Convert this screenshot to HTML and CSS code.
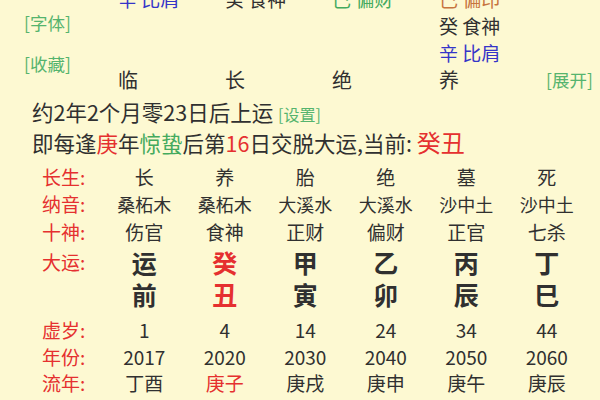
FILE: index.html
```html
<!DOCTYPE html>
<html lang="zh">
<head>
<meta charset="utf-8">
<link rel="stylesheet" href="styles.css">
</head>
<body>
<div class="page">
  <div class="pillars">
    <div class="side">
      <span class="link">[字体]</span>
      <span class="link">[收藏]</span>
    </div>
    <div class="cell blue">辛 比肩</div>
    <div class="cell">癸 食神</div>
    <div class="cell green">己 偏财</div>
    <div class="cell brown">己 偏印</div>
    <div class="end"></div>
    <div class="cell c5">癸 食神</div>
    <div class="cell c5 blue">辛 比肩</div>
    <div class="cell c2 big">临</div>
    <div class="cell big">长</div>
    <div class="cell big">绝</div>
    <div class="cell big">养</div>
    <div class="end"><span class="link">[展开]</span></div>
  </div>

  <div class="info">
    <p>约2年2个月零23日后上运 <span class="link small">[设置]</span></p>
    <p>即每逢<span class="red">庚</span>年<span class="green">惊蛰</span>后第<span class="red">16</span>日交脱大运,当前: <span class="red cur">癸丑</span></p>
  </div>

  <div class="table">
    <div class="row r1"><span class="lab">长生:</span><span>长</span><span>养</span><span>胎</span><span>绝</span><span>墓</span><span>死</span></div>
    <div class="row r1 na"><span class="lab">纳音:</span><span>桑柘木</span><span>桑柘木</span><span>大溪水</span><span>大溪水</span><span>沙中土</span><span>沙中土</span></div>
    <div class="row r1"><span class="lab">十神:</span><span>伤官</span><span>食神</span><span>正财</span><span>偏财</span><span>正官</span><span>七杀</span></div>
    <div class="row yun"><span class="lab">大运:</span><span>运</span><span class="red">癸</span><span>甲</span><span>乙</span><span>丙</span><span>丁</span></div>
    <div class="row yun"><span class="lab"></span><span>前</span><span class="red">丑</span><span>寅</span><span>卯</span><span>辰</span><span>巳</span></div>
    <div class="row r2 first"><span class="lab">虚岁:</span><span>1</span><span>4</span><span>14</span><span>24</span><span>34</span><span>44</span></div>
    <div class="row r2"><span class="lab">年份:</span><span>2017</span><span>2020</span><span>2030</span><span>2040</span><span>2050</span><span>2060</span></div>
    <div class="row r2"><span class="lab">流年:</span><span>丁酉</span><span class="red">庚子</span><span>庚戌</span><span>庚申</span><span>庚午</span><span>庚辰</span></div>
  </div>
</div>
</body>
</html>
```

FILE: styles.css
```css
html, body {
  margin: 0;
  padding: 0;
  background: #fdf9d2;
}
body {
  width: 600px;
  height: 400px;
  overflow: hidden;
  font-family: "Noto Sans CJK SC", "Noto Sans", sans-serif;
  color: #303030;
}
.page {
  width: 600px;
}
.pillars {
  display: grid;
  grid-template-columns: 118px repeat(4, 107px) 1fr;
  grid-template-rows: repeat(4, 27px);
  margin-top: -15px;
  font-size: 19px;
}
.side {
  grid-row: 1 / 5;
  grid-column: 1;
  display: flex;
  flex-direction: column;
  padding-top: 27px;
  padding-left: 24px;
  gap: 19px;
}
.link {
  color: #55b46e;
  font-size: 17.5px;
  line-height: 22px;
  white-space: nowrap;
}
.cell {
  line-height: 27px;
  white-space: nowrap;
}
.c5 { grid-column: 5; }
.c2 { grid-column: 2; }
.big { font-size: 20px; }
.end {
  grid-column: 6;
  display: flex;
  justify-content: flex-end;
  align-items: center;
  padding-right: 8px;
}
.blue { color: #3535c8; }
.green { color: #44aa5e; }
.brown { color: #c7743e; }
.red { color: #e5302f; }

.info {
  margin-top: 3px;
  padding-left: 32px;
  font-size: 21.5px;
}
.info p {
  margin: 0;
  line-height: 31px;
  height: 31px;
  white-space: nowrap;
}
.info .small { font-size: 16px; }
.cur {
  font-size: 24px;
  line-height: 20px;
}

.table {
  margin-top: 5px;
}
.row {
  display: grid;
  grid-template-columns: 104px repeat(6, 80.5px);
  align-items: center;
  font-size: 19px;
}
.row span {
  text-align: center;
  white-space: nowrap;
  line-height: 26px;
}
.row .lab {
  text-align: left;
  padding-left: 42px;
  color: #e5302f;
  font-size: 19px;
}
.r1 { height: 27.5px; }
.na span { font-size: 18px; }
.yun { height: 32px; }
.yun span {
  font-size: 25px;
  font-weight: bold;
  line-height: 32px;
}
.yun .lab { font-weight: normal; font-size: 19px; line-height: 26px; }
.r2 { height: 26.5px; }
.first { margin-top: 7.5px; }
```
